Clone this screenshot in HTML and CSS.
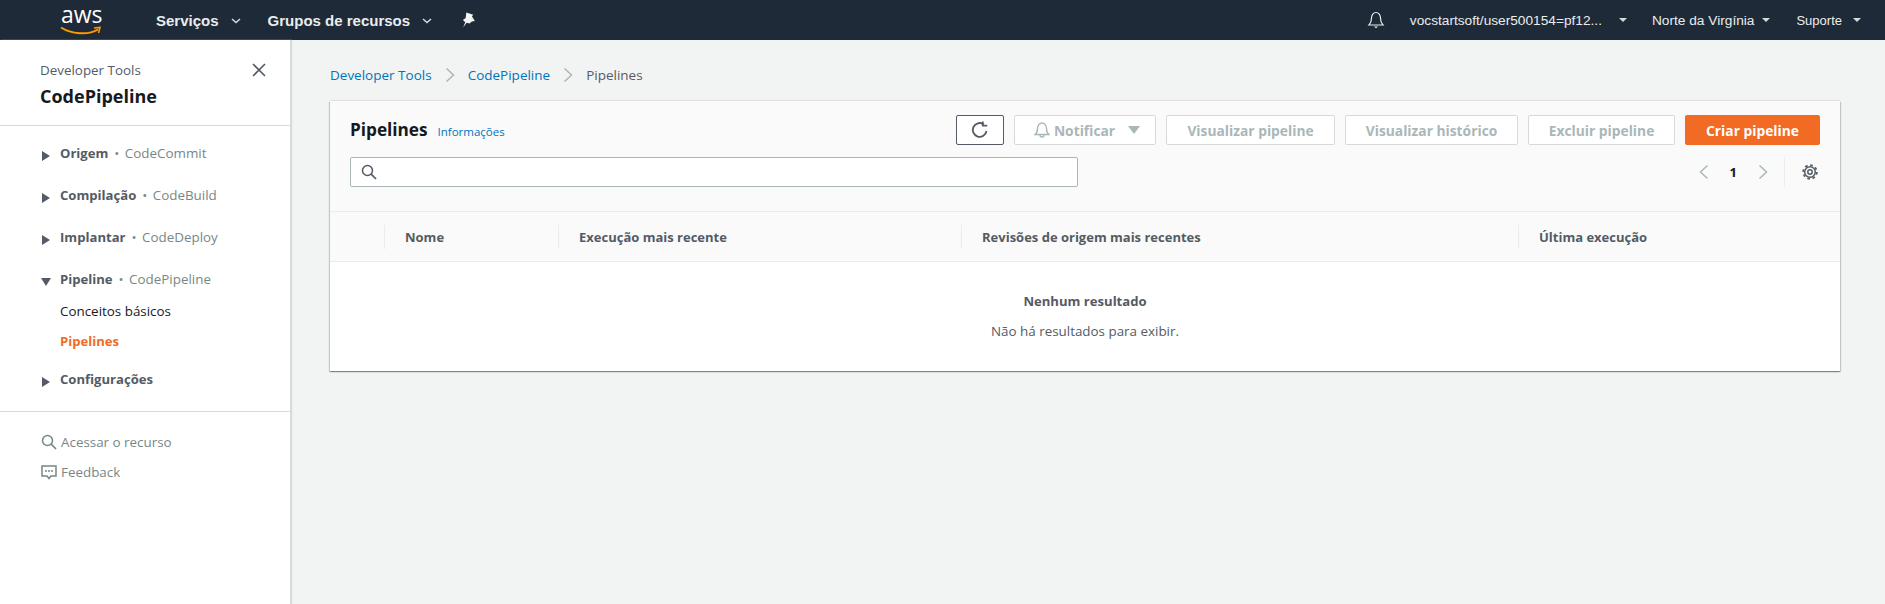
FILE: index.html
```html
<!DOCTYPE html>
<html>
<head>
  <title>CodePipeline</title>
  <link rel="stylesheet" href="styles.css">
</head>
<body>

  <header class="topbar">
    <div class="logo">
      <span class="logo-text">aws</span>
      <svg class="logo-smile" width="42" height="10" viewBox="0 0 42 10"><path d="M1 1.500C11 8 28 9.500 38 3.500" fill="none" stroke="#f90" stroke-width="2"/><path d="M34 2l6-.5-1.500 5.500" fill="none" stroke="#f90" stroke-width="1.600"/></svg>
    </div>
    <a class="top-main services">Serviços <svg class="caret-line" width="10" height="6" viewBox="0 0 10 6"><path d="M1 1l4 3.500L9 1" fill="none" stroke="#d5dbdb" stroke-width="1.500"/></svg></a>
    <a class="top-main groups">Grupos de recursos <svg class="caret-line" width="10" height="6" viewBox="0 0 10 6"><path d="M1 1l4 3.500L9 1" fill="none" stroke="#d5dbdb" stroke-width="1.500"/></svg></a>
    <svg class="pin" width="14" height="16" viewBox="0 0 13 15"><path d="M4 .5l6.500 2-1.300 1.600L12 8.500l-2.800.3-2.200 2-2.700-.7L1 14.500l2-5L.8 7.500l2.600-1.800.3-3z" fill="#f2f3f3"/></svg>
    <div class="top-right">
      <svg class="bell" width="18" height="18" viewBox="0 0 18 18"><path d="M2 14c2-2 2.500-3.500 2.500-7C4.500 4 6.500 1.500 9 1.500S13.500 4 13.500 7c0 3.500.5 5 2.500 7z" fill="none" stroke="#eaeded" stroke-width="1.200"/><path d="M7 15.500h4L9 17.200z" fill="#eaeded"/></svg>
      <a class="top-link user">vocstartsoft/user500154=pf12... <i class="caret-small"></i></a>
      <a class="top-link region">Norte da Virgínia <i class="caret-small"></i></a>
      <a class="top-link support">Suporte <i class="caret-small"></i></a>
    </div>
  </header>

  <div class="layout">
    <aside class="sidebar">
      <div class="side-head">
        <div>
          <div class="side-parent">Developer Tools</div>
          <div class="side-title">CodePipeline</div>
        </div>
        <svg class="side-close" width="14" height="14" viewBox="0 0 14 14"><path d="M1 1l12 12M13 1L1 13" stroke="#545b64" stroke-width="1.600" fill="none"/></svg>
      </div>
      <nav class="side-nav">
        <div class="nav-group"><i class="tri-right"></i><b>Origem</b><span class="nav-sub">• CodeCommit</span></div>
        <div class="nav-group"><i class="tri-right"></i><b>Compilação</b><span class="nav-sub">• CodeBuild</span></div>
        <div class="nav-group"><i class="tri-right"></i><b>Implantar</b><span class="nav-sub">• CodeDeploy</span></div>
        <div class="nav-group open"><i class="tri-down"></i><b>Pipeline</b><span class="nav-sub">• CodePipeline</span></div>
        <a class="nav-item">Conceitos básicos</a>
        <a class="nav-item active">Pipelines</a>
        <div class="nav-group"><i class="tri-right"></i><b>Configurações</b></div>
      </nav>
      <div class="side-foot">
        <a class="foot-link">
          <svg width="16" height="16" viewBox="0 0 16 16"><circle cx="6.500" cy="6.500" r="5" fill="none" stroke="#778787" stroke-width="1.500"/><path d="M10.200 10.200L15 15" stroke="#778787" stroke-width="1.700"/></svg>
          Acessar o recurso
        </a>
        <a class="foot-link">
          <svg width="16" height="16" viewBox="0 0 16 16"><path d="M1 2h14v10h-5l-2 2.500L6 12H1z" fill="none" stroke="#778787" stroke-width="1.500"/><path d="M4 7h2M7 7h2M10 7h2" stroke="#778787" stroke-width="1.500"/></svg>
          Feedback
        </a>
      </div>
    </aside>

    <main class="content">
      <div class="breadcrumb">
        <a>Developer Tools</a>
        <svg width="10" height="16" viewBox="0 0 10 16"><path d="M1.500 1.500L8.500 8l-7 6.500" fill="none" stroke="#aab7b8" stroke-width="1.500"/></svg>
        <a>CodePipeline</a>
        <svg width="10" height="16" viewBox="0 0 10 16"><path d="M1.500 1.500L8.500 8l-7 6.500" fill="none" stroke="#aab7b8" stroke-width="1.500"/></svg>
        <span>Pipelines</span>
      </div>

      <section class="card">
        <div class="card-head">
          <div class="head-row">
            <h1>Pipelines</h1>
            <a class="info">Informações</a>
            <div class="actions">
              <button class="btn btn-refresh">
                <svg width="18" height="18" viewBox="0 0 18 18"><path d="M15.500 10A6.900 6.900 0 1 1 12.500 3.200" fill="none" stroke="#545b64" stroke-width="1.800"/><path d="M11.800 .5v4.200h4.400" fill="none" stroke="#545b64" stroke-width="1.800"/></svg>
              </button>
              <button class="btn btn-notify">
                <svg width="16" height="16" viewBox="0 0 16 16"><path d="M1 12.500c2-1.500 2.500-3 2.500-6C3.500 3.500 5.500 1 8 1s4.500 2.500 4.500 5.500c0 3 .5 4.500 2.500 6z" fill="none" stroke="#aab7b8" stroke-width="1.400"/><path d="M6 13a2 2 0 0 0 4 0" fill="none" stroke="#aab7b8" stroke-width="1.400"/></svg>
                Notificar
                <i class="tri-btn"></i>
              </button>
              <button class="btn btn-view">Visualizar pipeline</button>
              <button class="btn btn-history">Visualizar histórico</button>
              <button class="btn btn-delete">Excluir pipeline</button>
              <button class="btn btn-primary">Criar pipeline</button>
            </div>
          </div>
          <div class="filter-row">
            <div class="search">
              <svg width="16" height="16" viewBox="0 0 16 16"><circle cx="6.500" cy="6.500" r="5" fill="none" stroke="#545b64" stroke-width="1.500"/><path d="M10.200 10.200L15 15" stroke="#545b64" stroke-width="1.700"/></svg>
            </div>
            <div class="pager">
              <svg width="10" height="16" viewBox="0 0 10 16"><path d="M8.500 1.500L1.500 8l7 6.500" fill="none" stroke="#aab7b8" stroke-width="1.500"/></svg>
              <span class="page-num">1</span>
              <svg width="10" height="16" viewBox="0 0 10 16"><path d="M1.500 1.500L8.500 8l-7 6.500" fill="none" stroke="#aab7b8" stroke-width="1.500"/></svg>
              <span class="pager-sep"></span>
              <svg class="gear" width="16" height="16" viewBox="0 0 16 16"><circle cx="8" cy="8" r="5.300" fill="none" stroke="#545b64" stroke-width="1.500"/><circle cx="8" cy="8" r="6.800" fill="none" stroke="#545b64" stroke-width="1.800" stroke-dasharray="2.670 2.670"/><circle cx="8" cy="8" r="2.200" fill="none" stroke="#545b64" stroke-width="1.500"/></svg>
            </div>
          </div>
        </div>

        <div class="table-head">
          <div class="th"></div>
          <div class="th">Nome</div>
          <div class="th">Execução mais recente</div>
          <div class="th">Revisões de origem mais recentes</div>
          <div class="th">Última execução</div>
        </div>

        <div class="empty">
          <b>Nenhum resultado</b>
          <p>Não há resultados para exibir.</p>
        </div>
      </section>
    </main>
  </div>

</body>
</html>
```

FILE: styles.css
```css
html, body { height: 100%; }
body { margin: 0; font-family: "Open Sans", "Noto Sans", Arial, sans-serif; font-size: 13.400px; color: #545b64; background-color: #f2f3f3; overflow: hidden; }
a { text-decoration: none; }
b { font-size: 13.100px; }

.topbar { height: 40px; background-color: #1f2a38; display: flex; align-items: center; color: #eaeded; }
.logo { margin-left: 60px; width: 42px; height: 34px; position: relative; }
.logo-text { position: absolute; left: 1px; top: -3px; font-family: "Open Sans", sans-serif; font-size: 23px; line-height: 28px; color: #fff; }
.logo-smile { position: absolute; left: 0; top: 23px; }
.top-main { font-family: "Liberation Sans", Arial, sans-serif; font-weight: bold; font-size: 15px; color: #eaeded; display: flex; align-items: center; gap: 12px; }
.services { margin-left: 54px; }
.groups { margin-left: 27px; }
.pin { margin-left: 30px; }
.caret-line { margin-top: 1px; }
.top-right { margin-left: auto; display: flex; align-items: center; }
.bell { margin-right: 25px; }
.top-link { font-family: "Liberation Sans", "DejaVu Sans", Arial, sans-serif; font-size: 13.700px; color: #eaeded; display: flex; align-items: center; gap: 8px; }
.user { gap: 14px; }
.region { margin-left: 25px; gap: 5px; }
.support { margin-left: 26px; margin-right: 24px; font-size: 13px; }
.caret-small { width: 0; height: 0; border-left: 4px solid transparent; border-right: 4px solid transparent; border-top: 4px solid #d5dbdb; margin-left: 3px; }

.layout { display: flex; height: calc(100% - 40px); }
.sidebar { width: 290px; flex-shrink: 0; background-color: #fff; border-right: 1px solid #d5dbdb; box-shadow: 1px 0 1px #d5dbdb; }
.side-head { height: 86px; border-bottom: 1px solid #d5dbdb; display: flex; justify-content: space-between; padding: 20px 24px 0 40px; box-sizing: border-box; }
.side-parent { line-height: 20px; color: #545b64; }
.side-title { margin-top: 4px; font-size: 18px; font-weight: bold; line-height: 24px; color: #16191f; }
.side-close { margin-top: 3px; }
.side-nav { padding-top: 16px; height: 269px; border-bottom: 1px solid #d5dbdb; }
.nav-group { height: 22px; margin-bottom: 20px; padding-left: 60px; position: relative; line-height: 22px; white-space: nowrap; }
.nav-group.open { margin-bottom: 11px; }
.nav-group b { color: #545b64; }
.nav-sub { margin-left: 6px; word-spacing: 2px; color: #778787; }
.tri-right { position: absolute; left: 42px; top: 9px; width: 0; height: 0; border-top: 5px solid transparent; border-bottom: 5px solid transparent; border-left: 8px solid #545b64; }
.tri-down { position: absolute; left: 41px; top: 10px; width: 0; height: 0; border-left: 5px solid transparent; border-right: 5px solid transparent; border-top: 8px solid #545b64; }
.nav-item { display: block; padding-left: 60px; height: 30px; line-height: 20px; color: #16191f; }
.nav-item.active { color: #f16b24; font-size: 13.100px; font-weight: bold; height: 37px; }
.side-foot { padding: 15px 0 0 41px; }
.foot-link { display: flex; align-items: center; gap: 4px; height: 30px; color: #778787; }

.content { flex: 1; padding: 25px 45px 0 39px; min-width: 0; }
.breadcrumb { display: flex; align-items: center; gap: 13px; height: 20px; margin-bottom: 16px; font-size: 13.500px; }
.breadcrumb a { color: #0073bb; }
.card { background-color: #fff; box-shadow: 0 1px 1px 0 rgba(0,28,36,.3), 1px 1px 1px 0 rgba(0,28,36,.15), -1px 1px 1px 0 rgba(0,28,36,.15), 0 -1px 1px 0 rgba(0,28,36,.08); }
.card-head { height: 111px; background-color: #fafafa; border-bottom: 1px solid #eaeded; padding: 14px 20px 0; box-sizing: border-box; }
.head-row { display: flex; align-items: center; height: 30px; }
h1 { margin: 0; font-size: 17.200px; font-weight: bold; color: #16191f; line-height: 30px; }
.info { margin-left: 10px; margin-top: 3px; font-size: 11.500px; color: #0073bb; }
.actions { margin-left: auto; display: flex; gap: 10px; }
.btn { height: 30px; box-sizing: border-box; border: 1px solid #d5dbdb; border-radius: 2px; background-color: #fff; color: #aab7b8; font-family: inherit; font-size: 13.800px; font-weight: bold; padding: 0; display: flex; align-items: center; justify-content: center; }
.btn-refresh { width: 48px; border-color: #545b64; }
.btn-notify { width: 142px; gap: 4px; padding-left: 4px; }
.btn-view { width: 169px; }
.btn-history { width: 173px; }
.btn-delete { width: 147px; }
.btn-primary { width: 135px; background-color: #f16b24; border-color: #f16b24; color: #fff; }
.tri-btn { margin-left: 9px; width: 0; height: 0; border-left: 6px solid transparent; border-right: 6px solid transparent; border-top: 8px solid #aab7b8; }
.filter-row { display: flex; justify-content: space-between; margin-top: 12px; }
.search { width: 728px; height: 30px; box-sizing: border-box; border: 1px solid #aab7b8; border-radius: 2px; background-color: #fff; display: flex; align-items: center; padding-left: 10px; }
.pager { display: flex; align-items: center; height: 30px; }
.page-num { margin: 0 21px 0 21px; font-size: 13px; font-weight: bold; color: #16191f; }
.pager-sep { width: 1px; height: 30px; background-color: #eaeded; margin: 0 17px 0 16px; }
.gear { margin-right: 2px; }
.table-head { height: 50px; background-color: #fafafa; border-bottom: 1px solid #eaeded; box-sizing: border-box; display: grid; grid-template-columns: 54px 174px 403px 557px 1fr; align-items: center; }
.th { height: 24px; line-height: 24px; padding-left: 20px; box-sizing: border-box; font-size: 13px; font-weight: bold; color: #545b64; border-left: 1px solid #eaeded; white-space: nowrap; }
.th:first-child { border-left: none; }
.empty { height: 109px; box-sizing: border-box; padding-top: 29px; text-align: center; }
.empty b { display: block; line-height: 20px; }
.empty p { margin: 10px 0 0; line-height: 20px; }
```
